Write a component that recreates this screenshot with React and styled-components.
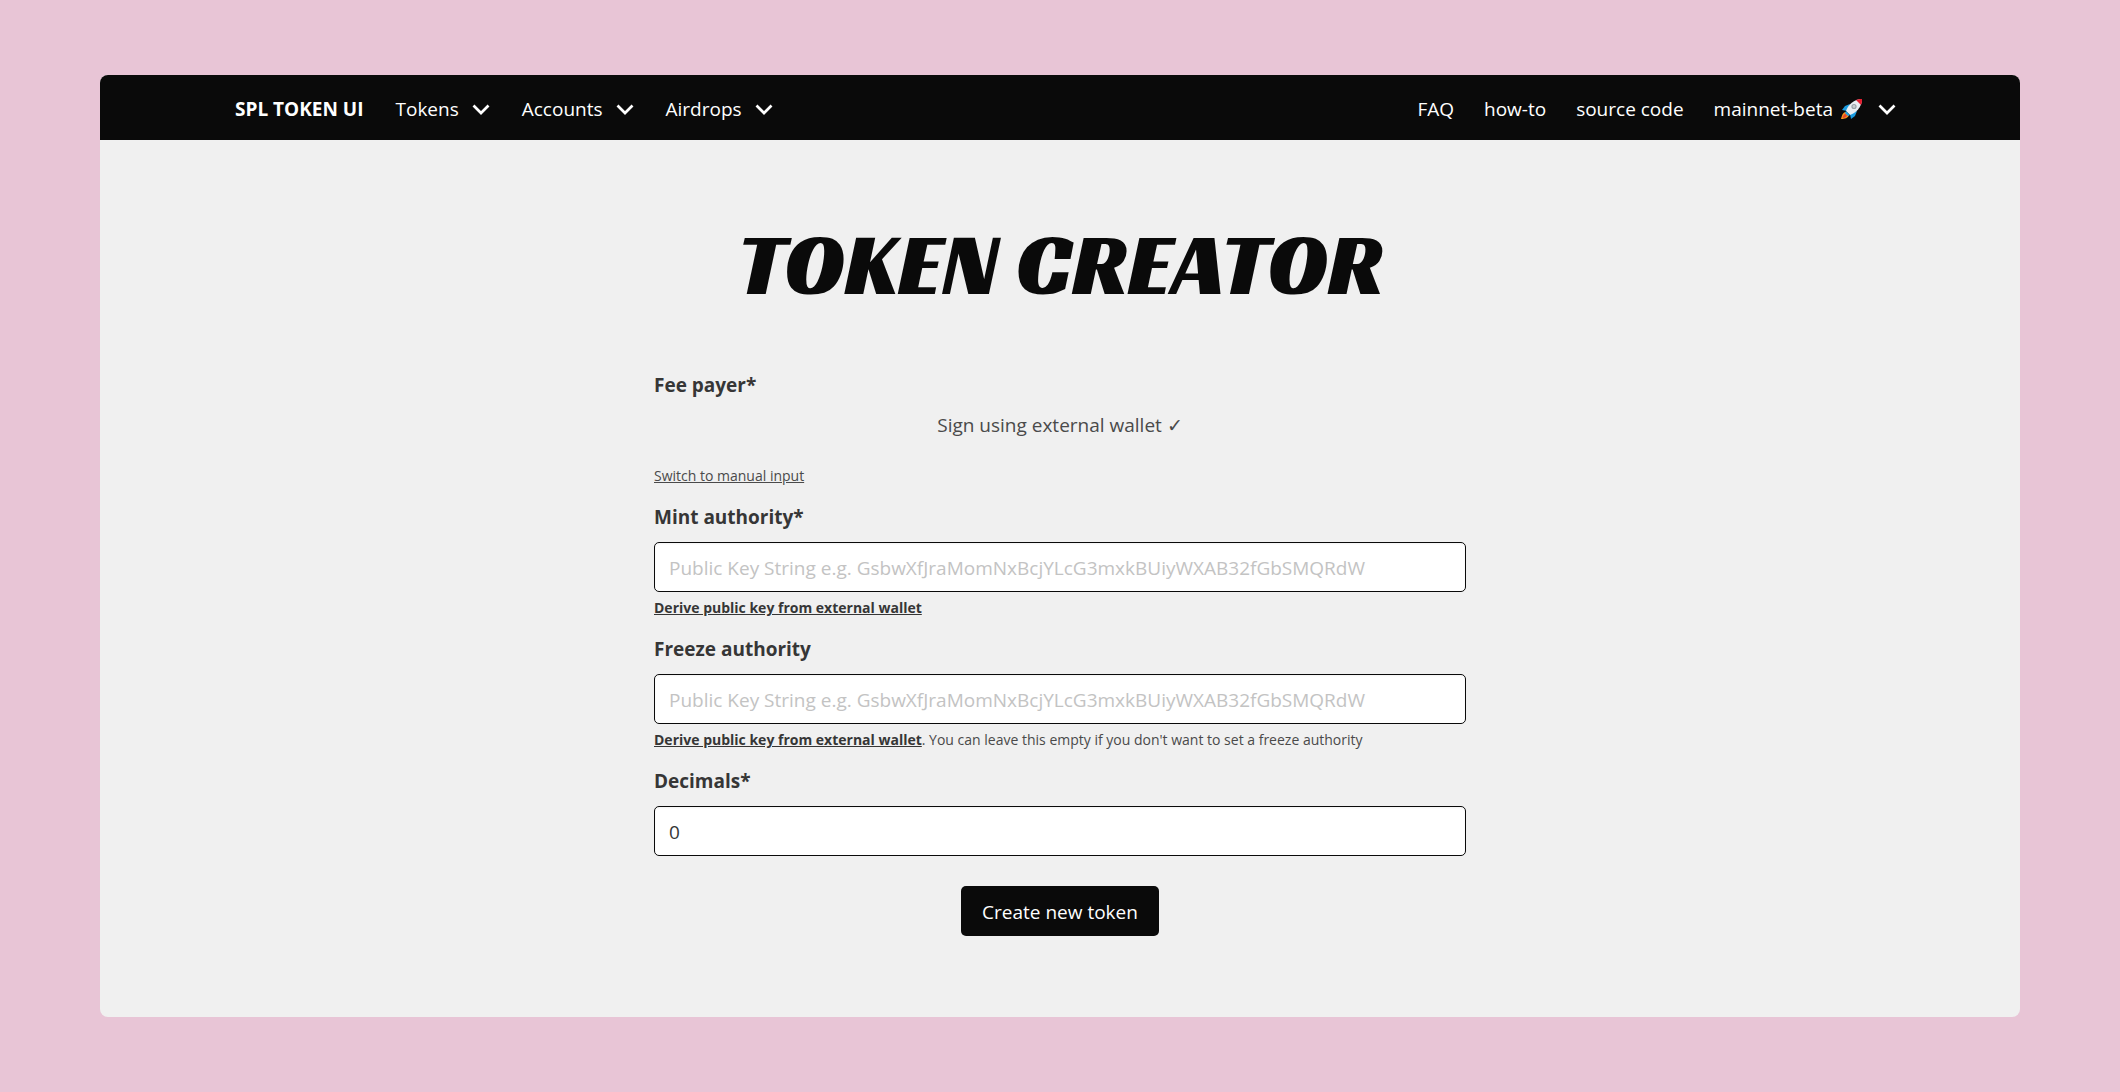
import * as React from "react";
import styled, { createGlobalStyle } from "styled-components";

const GlobalStyle = createGlobalStyle`
  *, *::before, *::after {
    box-sizing: border-box;
  }

  body {
    margin: 0;
    background: #e8c5d6;
    color: #4a4a4a;
    font-family: "Segoe UI", "Open Sans", "Noto Sans", sans-serif;
    font-size: 19px;
    line-height: 30px;
  }

  button, input {
    font: inherit;
  }
`;

const Page = styled.div`
  padding: 75px 100px;
`;

const Window = styled.div`
  background: #f0f0f0;
  border-radius: 8px;
  overflow: hidden;
`;

const Navbar = styled.header`
  background: #0a0a0a;
  color: white;
`;

const NavContainer = styled.nav`
  display: flex;
  align-items: center;
  justify-content: space-between;
  max-width: 1680px;
  height: 65px;
  margin: 0 auto;
  padding: 2px 4px 0 15px;
`;

const NavGroup = styled.div`
  display: flex;
  align-items: center;
  gap: ${props => props.$gap};
`;

const NavLink = styled.a`
  color: white;
  font-weight: ${props => (props.$brand ? 700 : 400)};
  text-decoration: none;
`;

const NavDropdown = styled.button`
  display: flex;
  align-items: center;
  padding: 0;
  border: 0;
  background: none;
  color: white;
  cursor: pointer;
`;

const ChevronIcon = styled.svg`
  width: 18px;
  height: 12px;
  margin-left: 13px;
`;

const RocketIcon = styled.svg`
  width: 22px;
  height: 22px;
  margin: 0 2px 0 8px;
`;

const Main = styled.main`
  padding: 77px 60px 81px;
`;

const Title = styled.h1`
  margin: 0 0 59px;
  color: #0a0a0a;
  font-family: "Racing Sans One", Lato, sans-serif;
  font-size: 88px;
  font-weight: 400;
  line-height: 94px;
  text-align: center;
`;

const Form = styled.form`
  max-width: 812px;
  margin: 0 auto;
`;

const Field = styled.div`
  margin-bottom: 15px;
`;

const Label = styled.label`
  display: block;
  margin-bottom: 10px;
  color: #363636;
  font-weight: 700;
`;

const Input = styled.input`
  display: block;
  width: 100%;
  height: 50px;
  padding: 2px 14px 0;
  border: 1px solid #0a0a0a;
  border-radius: 5px;
  background: white;
  color: #363636;
  box-shadow: inset 0 1px 2px rgba(10, 10, 10, 0.05);

  &::placeholder {
    color: #c3c3c3;
    opacity: 1;
  }
`;

const WalletStatus = styled.output`
  display: block;
  padding-bottom: 20px;
  text-align: center;
`;

const Help = styled.p`
  margin: 5px 0 0;
  font-size: 14px;
  line-height: 22px;
`;

const TextButton = styled.button`
  padding: 0;
  border: 0;
  background: none;
  color: ${props => (props.$strong ? "#363636" : "inherit")};
  font-weight: ${props => (props.$strong ? 700 : 400)};
  text-decoration: underline;
  cursor: pointer;
`;

const ButtonContainer = styled.div`
  display: flex;
  justify-content: center;
  padding-top: 15px;
`;

const Button = styled.button`
  height: 50px;
  padding: 2px 21px 0;
  border: 0;
  border-radius: 5px;
  background: #0a0a0a;
  color: white;
  cursor: pointer;
`;

const KEY_HINT = "Public Key String e.g. GsbwXfJraMomNxBcjYLcG3mxkBUiyWXAB32fGbSMQRdW";

const Chevron = () => (
    <ChevronIcon viewBox="0 0 18 12" aria-hidden="true">
        <path d="M1.500 2.500 9 10 16.500 2.500" fill="none" stroke="currentColor" strokeWidth="2.700" />
    </ChevronIcon>
);

const Rocket = () => (
    <RocketIcon viewBox="0 0 22 22" aria-hidden="true">
        <path d="M9 6 4 8 1 12l5 1z" fill="#1b9de2" />
        <path d="M16 13l-2 5-4 3-1-5z" fill="#1b9de2" />
        <path d="M5 14c-3 0-4 3-5 7 4 0 7-1 8-4z" fill="#f7941d" />
        <path d="M4.500 16C3 16 2 18 1.500 20c2 0 4-1 4.500-2.500z" fill="#e8452c" />
        <path d="M5 13C7 7 13 1 21 1c0 8-6 14-12 16z" fill="#e9eef2" />
        <path d="M15 2C17 1 19 1 21 1c0 2 0 4-1 6z" fill="#e81c2e" />
        <path d="M5 13l4 4-2 1-3-3z" fill="#1b9de2" />
        <circle cx="13" cy="8.500" r="2.600" fill="#9aa3a8" />
        <circle cx="13" cy="8.500" r="1.400" fill="#c9ced2" />
    </RocketIcon>
);

const KeyField = ({ id, label, children }) => (
    <Field>
        <Label htmlFor={id}>{label}</Label>
        <Input id={id} type="text" placeholder={KEY_HINT} />
        <Help>
            <TextButton type="button" $strong>Derive public key from external wallet</TextButton>
            {children}
        </Help>
    </Field>
);

const App = () => (
    <Page>
        <GlobalStyle />
        <Window>
            <Navbar>
                <NavContainer>
                    <NavGroup $gap="32px">
                        <NavLink href="#" $brand>SPL TOKEN UI</NavLink>
                        {["Tokens", "Accounts", "Airdrops"].map(name => (
                            <NavDropdown key={name} type="button" aria-haspopup="menu">
                                {name}
                                <Chevron />
                            </NavDropdown>
                        ))}
                    </NavGroup>
                    <NavGroup $gap="30px">
                        <NavLink href="#">FAQ</NavLink>
                        <NavLink href="#">how-to</NavLink>
                        <NavLink href="#">source code</NavLink>
                        <NavDropdown type="button" aria-haspopup="menu">
                            mainnet-beta
                            <Rocket />
                            <Chevron />
                        </NavDropdown>
                    </NavGroup>
                </NavContainer>
            </Navbar>
            <Main>
                <Title>TOKEN CREATOR</Title>
                <Form onSubmit={event => event.preventDefault()}>
                    <Field>
                        <Label htmlFor="fee-payer">Fee payer*</Label>
                        <WalletStatus id="fee-payer">Sign using external wallet ✓</WalletStatus>
                        <Help>
                            <TextButton type="button">Switch to manual input</TextButton>
                        </Help>
                    </Field>
                    <KeyField id="mint-authority" label="Mint authority*" />
                    <KeyField id="freeze-authority" label="Freeze authority">
                        . You can leave this empty if you don't want to set a freeze authority
                    </KeyField>
                    <Field>
                        <Label htmlFor="decimals">Decimals*</Label>
                        <Input id="decimals" type="text" inputMode="numeric" defaultValue="0" />
                    </Field>
                    <ButtonContainer>
                        <Button type="submit">Create new token</Button>
                    </ButtonContainer>
                </Form>
            </Main>
        </Window>
    </Page>
);

export default App;
